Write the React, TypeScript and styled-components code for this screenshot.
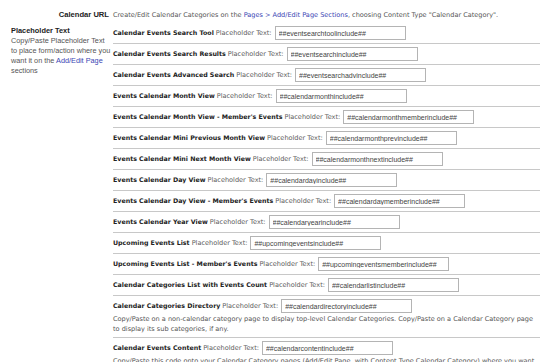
import React from "react";
import styled, { createGlobalStyle } from "styled-components";

const Global = createGlobalStyle`
  html, body { margin: 0; padding: 0; background: #ffffff; }
  body { font-family: "DejaVu Sans", Verdana, sans-serif; color: #333; font-size: 7px; line-height: 10px; }
`;

const Page = styled.div`
  display: grid;
  grid-template-columns: 98px 1fr;
  column-gap: 4px;
  padding: 9px 10px 0 11px;
  width: 550px;
  box-sizing: border-box;
`;

const LeftCell = styled.div<{ $right?: boolean }>`
  font-family: "Liberation Sans", Arial, sans-serif;
  font-size: 7px;
  line-height: 10px;
  text-align: ${(p) => (p.$right ? "right" : "left")};
`;

const UrlLabel = styled.div`
  font-weight: bold;
  font-size: 7.6px;
  line-height: 12px;
  color: #222;
`;

const Intro = styled.div`
  font-size: 6.55px;
  line-height: 12px;
  color: #555;
  padding-bottom: 2px;
  white-space: nowrap;
`;

const Link = styled.a`
  color: #3a46b4;
  text-decoration: none;
`;

const Help = styled.div`
  font-size: 7.3px;
  line-height: 10px;
  color: #555;
  padding-top: 2px;
  white-space: nowrap;
`;

const HelpTitle = styled.div`
  font-weight: bold;
  color: #222;
  font-size: 7.4px;
  line-height: 11px;
`;

const List = styled.div`
  display: flex;
  flex-direction: column;
`;

const Row = styled.div`
  padding: 3px 0 3px;
  border-bottom: 1px solid #c8c8c8;
`;

const Line = styled.div`
  display: flex;
  align-items: center;
  height: 14px;
  white-space: nowrap;
  font-size: 6.55px;
`;

const Label = styled.b`
  color: #222;
  font-weight: bold;
  font-size: 6.3px;
`;

const Hint = styled.span`
  color: #5c5c5c;
  margin: 0 3px 0 2px;
`;

const Field = styled.input`
  box-sizing: border-box;
  width: 131px;
  height: 14px;
  border: 1px solid #b4b4b4;
  padding: 0 3px;
  font-family: "Liberation Sans", Arial, sans-serif;
  font-size: 7px;
  color: #444;
  background: #fff;
  outline: none;
`;

const Desc = styled.div`
  font-size: 6.55px;
  line-height: 10px;
  color: #555;
  padding-top: 1px;
`;

type Item = { label: string; value: string; desc?: string };

const items: Item[] = [
  { label: "Calendar Events Search Tool", value: "##eventsearchtoolinclude##" },
  { label: "Calendar Events Search Results", value: "##eventsearchinclude##" },
  { label: "Calendar Events Advanced Search", value: "##eventsearchadvinclude##" },
  { label: "Events Calendar Month View", value: "##calendarmonthinclude##" },
  { label: "Events Calendar Month View - Member's Events", value: "##calendarmonthmemberinclude##" },
  { label: "Events Calendar Mini Previous Month View", value: "##calendarmonthprevinclude##" },
  { label: "Events Calendar Mini Next Month View", value: "##calendarmonthnextinclude##" },
  { label: "Events Calendar Day View", value: "##calendardayinclude##" },
  { label: "Events Calendar Day View - Member's Events", value: "##calendardaymemberinclude##" },
  { label: "Events Calendar Year View", value: "##calendaryearinclude##" },
  { label: "Upcoming Events List", value: "##upcomingeventsinclude##" },
  { label: "Upcoming Events List - Member's Events", value: "##upcomingeventsmemberinclude##" },
  { label: "Calendar Categories List with Events Count", value: "##calendarlistinclude##" },
  {
    label: "Calendar Categories Directory",
    value: "##calendardirectoryinclude##",
    desc: "Copy/Paste on a non-calendar category page to display top-level Calendar Categories. Copy/Paste on a Calendar Category page to display its sub categories, if any.",
  },
  {
    label: "Calendar Events Content",
    value: "##calendarcontentinclude##",
    desc: "Copy/Paste this code onto your Calendar Category pages (Add/Edit Page, with Content Type Calendar Category) where you want it.",
  },
];

export default function App() {
  return (
    <>
      <Global />
      <Page>
        <LeftCell $right>
          <UrlLabel>Calendar URL</UrlLabel>
        </LeftCell>
        <Intro>
          Create/Edit Calendar Categories on the <Link href="#">Pages &gt; Add/Edit Page Sections</Link>, choosing Content
          Type "Calendar Category".
        </Intro>
        <LeftCell>
          <Help>
            <HelpTitle>Placeholder Text</HelpTitle>
            Copy/Paste Placeholder Text
            <br />
            to place form/action where you
            <br />
            want it on the <Link href="#">Add/Edit Page</Link>
            <br />
            sections
          </Help>
        </LeftCell>
        <List>
          {items.map((it) => (
            <Row key={it.label}>
              <Line>
                <Label>{it.label}</Label>
                <Hint>Placeholder Text:</Hint>
                <Field readOnly defaultValue={it.value} />
              </Line>
              {it.desc && <Desc>{it.desc}</Desc>}
            </Row>
          ))}
        </List>
      </Page>
    </>
  );
}
